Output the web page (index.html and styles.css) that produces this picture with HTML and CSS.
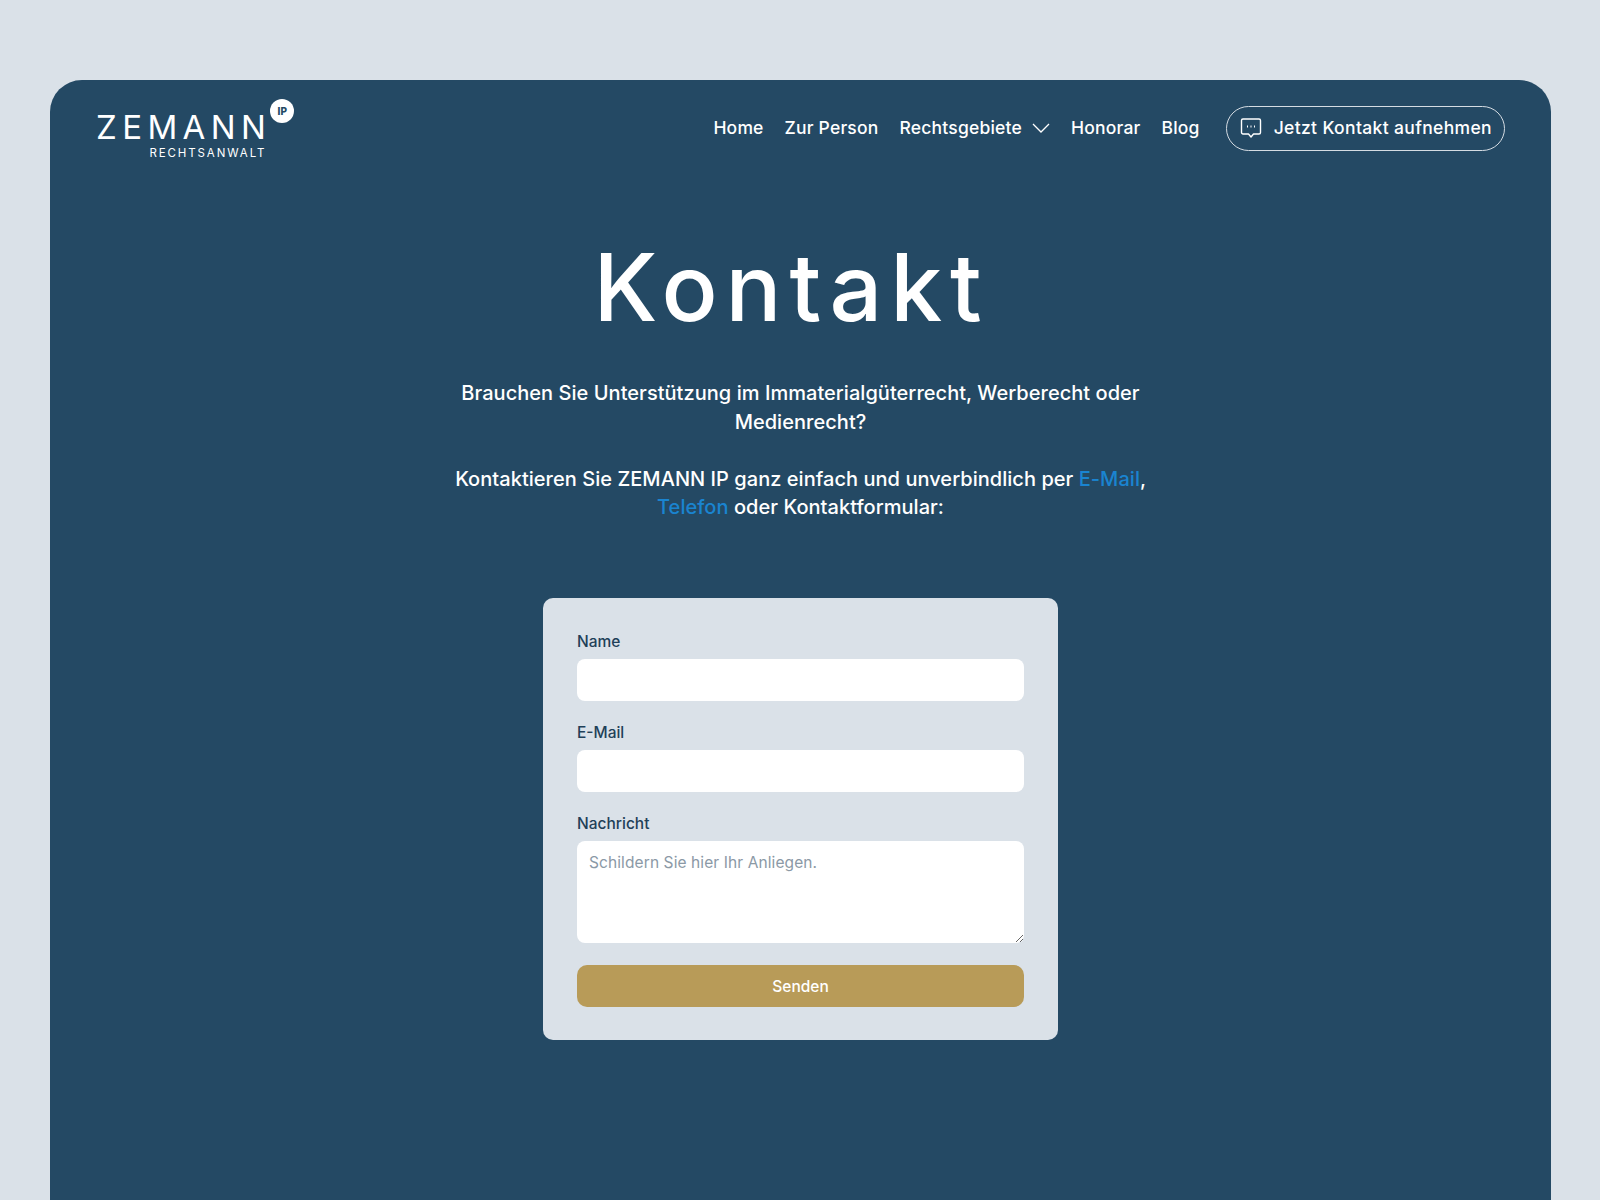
FILE: index.html
```html
<!DOCTYPE html>
<html lang="de">

<head>
    <meta charset="utf-8">
    <title>Kontakt - ZEMANN IP</title>
    <link rel="stylesheet" href="styles.css">
</head>

<body>
    <div class="panel">
        <!-- Header -->
        <header class="site-header">
            <a href="#" class="logo">
                <span class="logo-name">ZEMANN</span>
                <span class="logo-badge">IP</span>
                <span class="logo-sub">RECHTSANWALT</span>
            </a>
            <nav class="main-nav">
                <a href="#">Home</a>
                <a href="#">Zur Person</a>
                <a href="#" class="has-sub">Rechtsgebiete
                    <svg width="18" height="10" viewBox="0 0 18 10" fill="none" stroke="currentColor" stroke-width="1.3">
                        <path d="M1 1l8 8 8-8" />
                    </svg>
                </a>
                <a href="#">Honorar</a>
                <a href="#">Blog</a>
                <a href="#" class="contact-btn">
                    <svg width="22" height="22" viewBox="0 0 22 22" fill="none" stroke="currentColor" stroke-width="1.4" stroke-linejoin="round">
                        <path d="M3 2h16a1.500 1.500 0 0 1 1.500 1.500v12a1.500 1.500 0 0 1-1.500 1.500h-5.500l-2.500 3-2.500-3H3a1.500 1.500 0 0 1-1.500-1.500v-12A1.500 1.500 0 0 1 3 2z" />
                        <path d="M7 9.500h1M10.500 9.500h1M14 9.500h1" stroke-width="1.800" />
                    </svg>
                    Jetzt Kontakt aufnehmen
                </a>
            </nav>
        </header>

        <main class="content">
            <h1>Kontakt</h1>
            <div class="intro">
                <p>Brauchen Sie Unterstützung im Immaterialgüterrecht, Werberecht oder Medienrecht?</p>
                <p>Kontaktieren Sie ZEMANN IP ganz einfach und unverbindlich per <a href="#">E-Mail</a>,
                    <a href="#">Telefon</a> oder Kontaktformular:</p>
            </div>

            <form class="contact-form">
                <div class="field">
                    <label for="name">Name</label>
                    <input type="text" id="name">
                </div>
                <div class="field">
                    <label for="email">E-Mail</label>
                    <input type="email" id="email">
                </div>
                <div class="field">
                    <label for="message">Nachricht</label>
                    <textarea id="message" placeholder="Schildern Sie hier Ihr Anliegen."></textarea>
                </div>
                <button type="submit" class="send-btn">Senden</button>
            </form>
        </main>
    </div>
</body>

</html>
```

FILE: styles.css
```css
/* Page */
html,
body {
    height: 100%;
}

body {
    margin: 0;
    padding: 80px 49px 0 50px;
    box-sizing: border-box;
    overflow: hidden;
    background-color: #dae1e8;
    font-family: Inter, "Open Sans", sans-serif;
}

.panel {
    height: 1120px;
    background-color: #244964;
    border-radius: 32px 32px 0 0;
    color: #fff;
}

/* Header */
.site-header {
    display: flex;
    justify-content: space-between;
    align-items: flex-start;
    padding: 18px 46px 0 46px;
}

.logo {
    display: grid;
    grid-template-columns: auto auto;
    justify-content: start;
    color: #fff;
    text-decoration: none;
}

.logo-name {
    margin-top: 9px;
    margin-right: -1px;
    font-size: 33px;
    line-height: 40px;
    font-weight: 400;
    letter-spacing: 5.400px;
}

.logo-badge {
    width: 24px;
    height: 24px;
    margin-top: 1px;
    border-radius: 50%;
    background-color: #fff;
    color: #244964;
    font-size: 10px;
    font-weight: 800;
    line-height: 24px;
    text-align: center;
}

.logo-sub {
    margin-right: 4px;
    font-size: 11.500px;
    line-height: 12px;
    letter-spacing: 1.900px;
    text-align: right;
}

.main-nav {
    display: flex;
    align-items: center;
    gap: 21px;
    margin-top: 8px;
    font-size: 17.500px;
    font-weight: 500;
    letter-spacing: 0.200px;
}

.main-nav a {
    padding-bottom: 2px;
    color: #fff;
    text-decoration: none;
}

.has-sub {
    display: flex;
    align-items: center;
    gap: 10px;
}

.contact-btn {
    display: flex;
    align-items: center;
    gap: 12px;
    height: 45px;
    box-sizing: border-box;
    margin-left: 5px;
    padding: 0 12px 0 13px;
    border: 1.500px solid #d5dce3;
    border-radius: 23px;
    letter-spacing: 0.350px;
}

/* Main content */
.content {
    display: flex;
    flex-direction: column;
    align-items: center;
}

h1 {
    margin: 73px 18px 0 0;
    font-size: 93px;
    line-height: 110px;
    font-weight: 500;
    letter-spacing: 7.900px;
}

.intro {
    width: 720px;
    margin-top: 37px;
    font-size: 20px;
    line-height: 28.500px;
    font-weight: 500;
    letter-spacing: 0.040px;
    text-align: center;
}

.intro p {
    margin: 0 0 28.500px 0;
}

.intro a {
    color: #1a84d0;
    text-decoration: none;
}

/* Form card */
.contact-form {
    display: flex;
    flex-direction: column;
    width: 515px;
    box-sizing: border-box;
    margin-top: 48px;
    padding: 34px 34px 33px 34px;
    background-color: #dae1e8;
    border-radius: 10px;
}

.field {
    margin-bottom: 22px;
}

.field label {
    display: block;
    margin-bottom: 7px;
    font-size: 15.500px;
    line-height: 20px;
    font-weight: 500;
    color: #1f4058;
}

.field input,
.field textarea {
    display: block;
    width: 100%;
    box-sizing: border-box;
    border: none;
    border-radius: 8px;
    background-color: #fff;
    font-family: inherit;
    font-size: 15.500px;
}

.field input {
    height: 42px;
}

.field textarea {
    height: 102px;
    padding: 12px;
    letter-spacing: 0.100px;
}

.field textarea::placeholder {
    color: #8b99a6;
}

.send-btn {
    height: 42px;
    border: none;
    border-radius: 10px;
    background-color: #b89b58;
    color: #fff;
    font-family: inherit;
    font-size: 15.500px;
    font-weight: 500;
}
```
